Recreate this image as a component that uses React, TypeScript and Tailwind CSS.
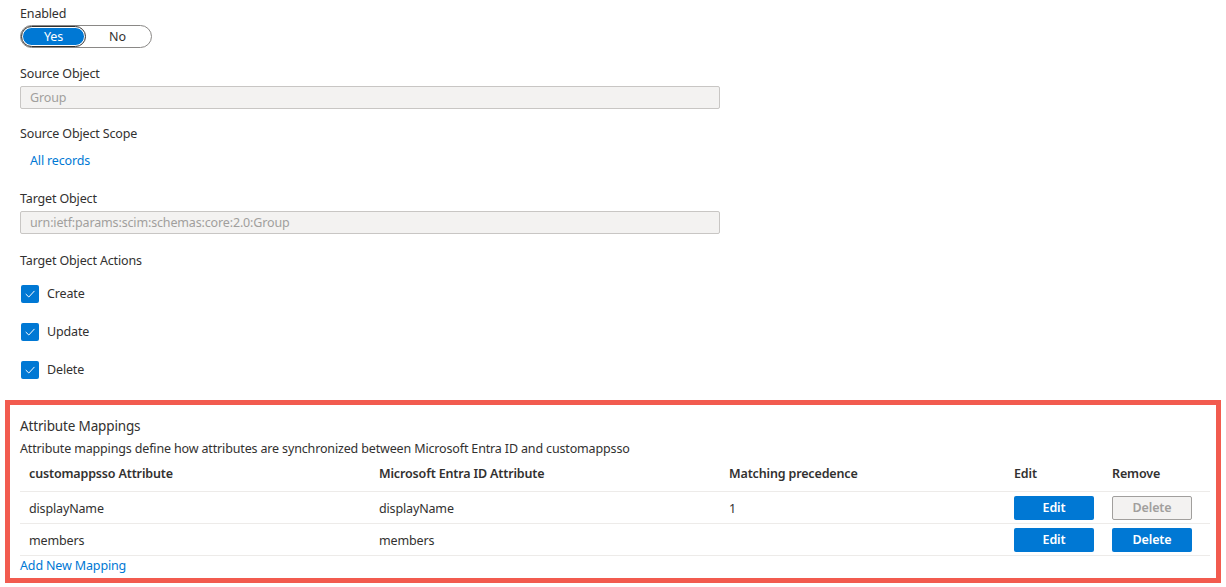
import React, { useState } from "react";

const font = { fontFamily: '"Noto Sans", "Open Sans", sans-serif' };

const Check = ({ label }: { label: string }) => (
    <div className="flex items-center h-[18px] gap-[8px]">
        <span className="w-[18px] h-[18px] ml-[1px] rounded-[2px] bg-[#0078d4] flex items-center justify-center">
            <svg width="12" height="12" viewBox="0 0 12 12" fill="none">
                <path d="M2 6.3 L4.8 9 L10.2 3.2" stroke="#ffffff" strokeWidth="1" strokeLinecap="round" strokeLinejoin="round" />
            </svg>
        </span>
        <span>{label}</span>
    </div>
);

const Field = ({ value }: { value: string }) => (
    <div className="mt-[3px] w-[700px] h-[23px] border border-[#c8c6c4] rounded-[2px] bg-[#f3f2f1] text-[#a19f9d] pl-[9px] pt-[1px] flex items-center">
        {value}
    </div>
);

const rows = [
    { src: "displayName", target: "displayName", prec: "1", canDelete: false },
    { src: "members", target: "members", prec: "", canDelete: true },
];

const App = () => {
    const [enabled, setEnabled] = useState(true);

    return (
        <div className="w-[1226px] h-[587px] bg-white text-[#323130] text-[12.5px] tracking-[-0.15px] leading-[18px] overflow-hidden" style={font}>
            <div className="pl-[20px] pt-[5px]">
                <div>Enabled</div>
                <div className="mt-[2px] w-[132px] h-[23px] rounded-full border border-[#8a8886] flex items-center px-[1px]">
                    <button
                        onClick={() => setEnabled(true)}
                        className={`w-[63px] h-[19px] rounded-full text-center leading-[17px] ${enabled ? "bg-[#0078d4] text-white border border-white outline outline-1 outline-[#323130]" : ""}`}
                    >
                        Yes
                    </button>
                    <button
                        onClick={() => setEnabled(false)}
                        className={`w-[65px] h-[19px] rounded-full text-center leading-[17px] ${!enabled ? "bg-[#0078d4] text-white border border-white outline outline-1 outline-[#323130]" : ""}`}
                    >
                        No
                    </button>
                </div>

                <div className="mt-[17px]">Source Object</div>
                <Field value="Group" />

                <div className="mt-[16px]">Source Object Scope</div>
                <div className="mt-[9px] pl-[10px] text-[#0078d4]">All records</div>

                <div className="mt-[20px]">Target Object</div>
                <Field value="urn:ietf:params:scim:schemas:core:2.0:Group" />

                <div className="mt-[18px]">Target Object Actions</div>
                <div className="mt-[15px] flex flex-col gap-[20px]">
                    <Check label="Create" />
                    <Check label="Update" />
                    <Check label="Delete" />
                </div>
            </div>

            <div className="mt-[21px] mx-[5px] w-[1216px] h-[183px] border-[5px] border-[#f25b4f] pl-[10px] pt-[12px]">
                <div className="text-[13.5px]">Attribute Mappings</div>
                <div className="mt-[5px]">Attribute mappings define how attributes are synchronized between Microsoft Entra ID and customappsso</div>
                <div className="w-[1190px]">
                    <div className="grid grid-cols-[350px_350px_285px_98px_107px] h-[34px] pb-[1px] items-center border-b border-[#edebe9] font-semibold">
                        <div className="pl-[9px]">customappsso Attribute</div>
                        <div className="pl-[9px]">Microsoft Entra ID Attribute</div>
                        <div className="pl-[9px]">Matching precedence</div>
                        <div className="pl-[9px]">Edit</div>
                        <div className="pl-[9px]">Remove</div>
                    </div>
                    {rows.map((r) => (
                        <div key={r.src} className="grid grid-cols-[350px_350px_285px_98px_107px] h-[32px] pt-[1px] items-center border-b border-[#edebe9]">
                            <div className="pl-[9px] pt-[1px]">{r.src}</div>
                            <div className="pl-[9px] pt-[1px]">{r.target}</div>
                            <div className="pl-[9px] pt-[1px]">{r.prec}</div>
                            <div className="pl-[9px]">
                                <button className="w-[80px] h-[24px] rounded-[2px] bg-[#0078d4] text-white font-semibold">Edit</button>
                            </div>
                            <div className="pl-[9px]">
                                {r.canDelete ? (
                                    <button className="w-[80px] h-[24px] rounded-[2px] bg-[#0078d4] text-white font-semibold">Delete</button>
                                ) : (
                                    <button className="w-[80px] h-[24px] rounded-[2px] bg-[#f3f2f1] border border-[#a19f9d] text-[#a19f9d] font-semibold">Delete</button>
                                )}
                            </div>
                        </div>
                    ))}
                    <div className="mt-[1px] h-[18px] text-[#0078d4]">Add New Mapping</div>
                </div>
            </div>
        </div>
    );
};

export default App;
